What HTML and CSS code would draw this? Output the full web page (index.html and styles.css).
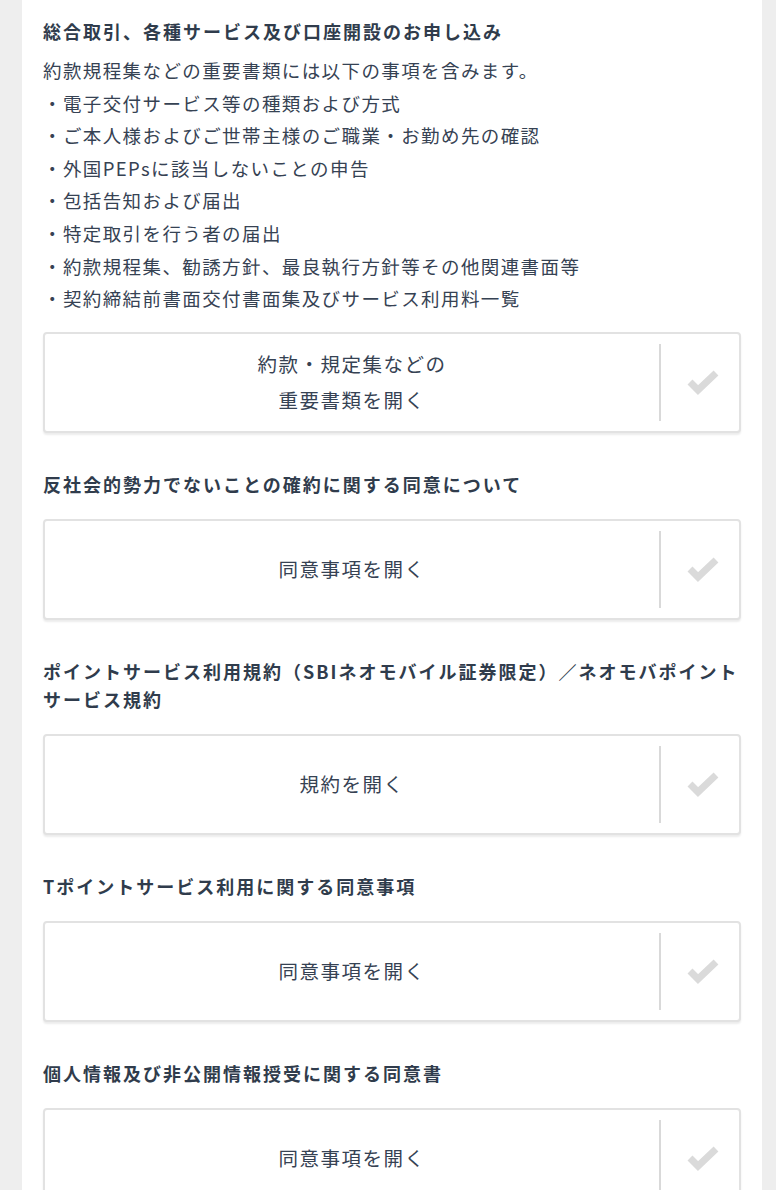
FILE: index.html
```html
<!DOCTYPE html>
<html lang="ja">
<head>
<meta charset="utf-8">
<link rel="stylesheet" href="styles.css">
</head>
<body>
<div class="panel">
  <section class="sec first">
    <h2 class="title">総合取引、各種サービス及び口座開設のお申し込み</h2>
    <p class="lead">約款規程集などの重要書類には以下の事項を含みます。</p>
    <ul class="list">
      <li>・電子交付サービス等の種類および方式</li>
      <li>・ご本人様およびご世帯主様のご職業・お勤め先の確認</li>
      <li>・外国PEPsに該当しないことの申告</li>
      <li>・包括告知および届出</li>
      <li>・特定取引を行う者の届出</li>
      <li>・約款規程集、勧誘方針、最良執行方針等その他関連書面等</li>
      <li>・契約締結前書面交付書面集及びサービス利用料一覧</li>
    </ul>
    <div class="card">
      <div class="card-label">約款・規定集などの<br>重要書類を開く</div>
      <div class="card-check"><svg width="34" height="26" viewBox="0 0 34 26"><polyline points="4,13 12,21 30,4" fill="none" stroke="#dadada" stroke-width="7"/></svg></div>
    </div>
  </section>
  <section class="sec">
    <h2 class="title">反社会的勢力でないことの確約に関する同意について</h2>
    <div class="card">
      <div class="card-label">同意事項を開く</div>
      <div class="card-check"><svg width="34" height="26" viewBox="0 0 34 26"><polyline points="4,13 12,21 30,4" fill="none" stroke="#dadada" stroke-width="7"/></svg></div>
    </div>
  </section>
  <section class="sec">
    <h2 class="title">ポイントサービス利用規約（SBIネオモバイル証券限定）／ネオモバポイントサービス規約</h2>
    <div class="card">
      <div class="card-label">規約を開く</div>
      <div class="card-check"><svg width="34" height="26" viewBox="0 0 34 26"><polyline points="4,13 12,21 30,4" fill="none" stroke="#dadada" stroke-width="7"/></svg></div>
    </div>
  </section>
  <section class="sec">
    <h2 class="title">Tポイントサービス利用に関する同意事項</h2>
    <div class="card">
      <div class="card-label">同意事項を開く</div>
      <div class="card-check"><svg width="34" height="26" viewBox="0 0 34 26"><polyline points="4,13 12,21 30,4" fill="none" stroke="#dadada" stroke-width="7"/></svg></div>
    </div>
  </section>
  <section class="sec">
    <h2 class="title">個人情報及び非公開情報授受に関する同意書</h2>
    <div class="card">
      <div class="card-label">同意事項を開く</div>
      <div class="card-check"><svg width="34" height="26" viewBox="0 0 34 26"><polyline points="4,13 12,21 30,4" fill="none" stroke="#dadada" stroke-width="7"/></svg></div>
    </div>
  </section>
</div>
</body>
</html>
```

FILE: styles.css
```css
html, body {
  margin: 0;
  padding: 0;
}
body {
  background: #eeeeee;
  font-family: "Noto Sans CJK JP", "Noto Sans", sans-serif;
  color: #364253;
}
.panel {
  margin: 0 14px 0 22px;
  background: #ffffff;
  padding: 17px 21px 40px 21px;
  min-height: 1200px;
}
.sec {
  margin-bottom: 37px;
}
.title {
  margin: 0;
  font-size: 18px;
  font-weight: bold;
  line-height: 28px;
  letter-spacing: 2px;
  color: #303c4c;
}
.lead {
  margin: 9px 0 0 0;
  font-size: 18.5px;
  line-height: 32.6px;
  letter-spacing: 1.4px;
}
.list {
  list-style: none;
  margin: 0;
  padding: 0;
  font-size: 18.5px;
  line-height: 32.6px;
  letter-spacing: 1.4px;
}
.first .card {
  margin-top: 17px;
}
.card {
  margin-top: 21px;
  display: flex;
  height: 97px;
  border: 2px solid #e2e2e2;
  border-radius: 4px;
  box-shadow: 0 2px 2px rgba(0,0,0,0.08);
  background: #fff;
}
.card-label {
  flex: 1;
  display: flex;
  align-items: center;
  justify-content: center;
  text-align: center;
  font-size: 19.5px;
  line-height: 36px;
  letter-spacing: 1.5px;
  color: #364253;
}
.card-check {
  width: 80px;
  margin: 10px 0;
  border-left: 2px solid #d9d9d9;
  display: flex;
  align-items: center;
  justify-content: center;
  padding-left: 6px;
  box-sizing: border-box;
}
.card-check svg {
  display: block;
}
```
